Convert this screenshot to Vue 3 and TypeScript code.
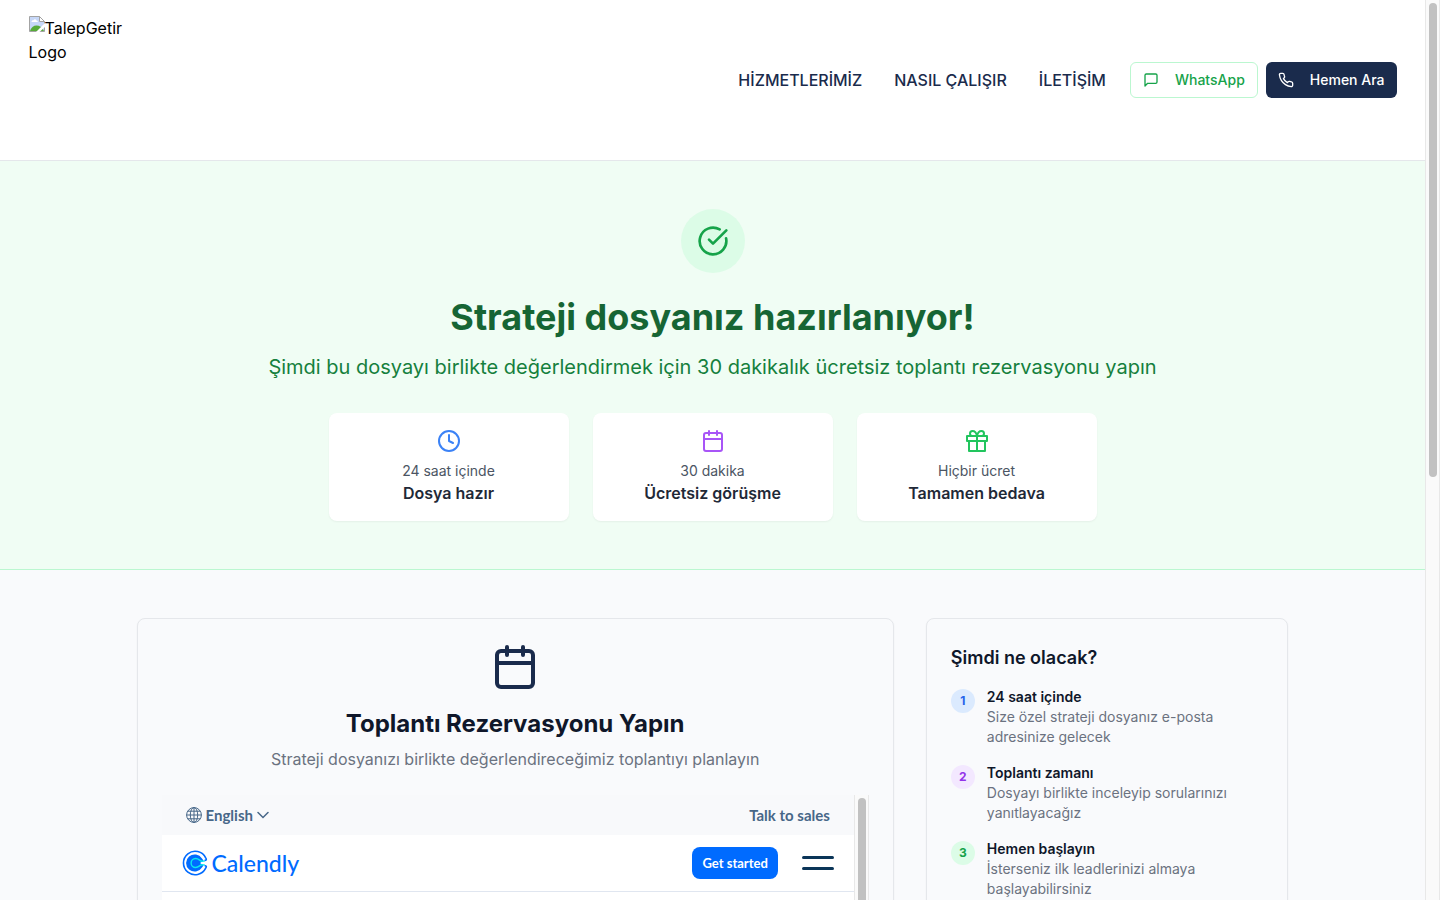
<script setup lang="ts">
interface NavItem {
  label: string
  href: string
}

interface Highlight {
  icon: 'clock' | 'calendar' | 'gift'
  caption: string
  title: string
}

interface Step {
  tone: 'blue' | 'purple' | 'green'
  title: string
  text: string
}

const navItems: NavItem[] = [
  { label: 'HİZMETLERİMİZ', href: '#hizmetler' },
  { label: 'NASIL ÇALIŞIR', href: '#nasil-calisir' },
  { label: 'İLETİŞİM', href: '#iletisim' },
]

const highlights: Highlight[] = [
  { icon: 'clock', caption: '24 saat içinde', title: 'Dosya hazır' },
  { icon: 'calendar', caption: '30 dakika', title: 'Ücretsiz görüşme' },
  { icon: 'gift', caption: 'Hiçbir ücret', title: 'Tamamen bedava' },
]

const steps: Step[] = [
  { tone: 'blue', title: '24 saat içinde', text: 'Size özel strateji dosyanız e-posta adresinize gelecek' },
  { tone: 'purple', title: 'Toplantı zamanı', text: 'Dosyayı birlikte inceleyip sorularınızı yanıtlayacağız' },
  { tone: 'green', title: 'Hemen başlayın', text: 'İsterseniz ilk leadlerinizi almaya başlayabilirsiniz' },
]
</script>

<template>
  <div class="window">
    <div class="page">
      <header class="site-header">
        <div class="header-inner">
          <a class="brand" href="#">
            <svg class="brand-icon" viewBox="0 0 16 16" aria-hidden="true">
              <path d="M.5.5h10l5 5v10H.5z" fill="#c6d7f8" stroke="#a3a3a3" />
              <path d="M2.500 6c0-1.400 1.200-1.900 2-1.700C5 3 7 3 7.400 4.400 8.500 4.300 9 5.200 8.700 6z" fill="#fff" />
              <path d="M1 15c1-3.500 3.500-5.500 6.500-5.500S13 11 15 15z" fill="#57ab39" />
              <path d="M16 7 7 16h3.500l5.500-5z" fill="#fff" />
              <path d="M10.500.5v5h5z" fill="#fff" stroke="#a3a3a3" />
            </svg>TalepGetir Logo
          </a>
          <div class="header-right">
            <nav class="nav">
              <a v-for="item in navItems" :key="item.href" :href="item.href">{{ item.label }}</a>
            </nav>
            <div class="actions">
              <button type="button" class="btn btn-outline">
                <svg class="icon" viewBox="0 0 24 24"><path d="M21 15a2 2 0 0 1-2 2H7l-4 4V5a2 2 0 0 1 2-2h14a2 2 0 0 1 2 2z" /></svg>
                WhatsApp
              </button>
              <button type="button" class="btn btn-solid">
                <svg class="icon" viewBox="0 0 24 24"><path d="M22 16.920v3a2 2 0 0 1-2.180 2 19.790 19.790 0 0 1-8.630-3.070 19.500 19.500 0 0 1-6-6 19.790 19.790 0 0 1-3.070-8.670A2 2 0 0 1 4.110 2h3a2 2 0 0 1 2 1.720 12.840 12.840 0 0 0 .7 2.810 2 2 0 0 1-.45 2.110L8.090 9.910a16 16 0 0 0 6 6l1.270-1.270a2 2 0 0 1 2.110-.45 12.840 12.840 0 0 0 2.810.7A2 2 0 0 1 22 16.920z" /></svg>
                Hemen Ara
              </button>
            </div>
          </div>
        </div>
      </header>

      <section class="hero">
        <div class="hero-badge">
          <svg class="icon" viewBox="0 0 24 24"><path d="M21.801 10A10 10 0 1 1 17 3.335" /><path d="m9 11 3 3L22 4" /></svg>
        </div>
        <h1>Strateji dosyanız hazırlanıyor!</h1>
        <p class="hero-lead">Şimdi bu dosyayı birlikte değerlendirmek için 30 dakikalık ücretsiz toplantı rezervasyonu yapın</p>
        <div class="highlights">
          <div v-for="item in highlights" :key="item.title" class="highlight">
            <svg class="icon" :class="item.icon" viewBox="0 0 24 24">
              <template v-if="item.icon === 'clock'">
                <circle cx="12" cy="12" r="10" /><path d="M12 6v6l4 2" />
              </template>
              <template v-else-if="item.icon === 'calendar'">
                <path d="M8 2v4M16 2v4M3 10h18" /><rect x="3" y="4" width="18" height="18" rx="2" />
              </template>
              <template v-else>
                <path d="M20 12v10H4V12M12 22V7" />
                <rect x="2" y="7" width="20" height="5" />
                <path d="M12 7H7.500a2.500 2.500 0 0 1 0-5C11 2 12 7 12 7zM12 7h4.500a2.500 2.500 0 0 0 0-5C13 2 12 7 12 7z" />
              </template>
            </svg>
            <p class="caption">{{ item.caption }}</p>
            <p class="highlight-title">{{ item.title }}</p>
          </div>
        </div>
      </section>

      <main class="content">
        <section class="card booking">
          <svg class="icon booking-icon" viewBox="0 0 24 24"><path d="M8 2v4M16 2v4M3 10h18" /><rect x="3" y="4" width="18" height="18" rx="2" /></svg>
          <h2>Toplantı Rezervasyonu Yapın</h2>
          <p class="booking-lead">Strateji dosyanızı birlikte değerlendireceğimiz toplantıyı planlayın</p>
          <div class="embed">
            <div class="embed-page">
              <div class="embed-top">
                <button type="button" class="language">
                  <svg class="globe" viewBox="0 0 16 16" aria-hidden="true">
                    <circle cx="8" cy="8" r="7.400" />
                    <ellipse cx="8" cy="8" rx="3.700" ry="7.400" />
                    <path d="M8 .6v14.800M.6 8h14.800M1.800 4.200h12.400M1.800 11.800h12.400" />
                  </svg>
                  English
                  <svg class="chevron" viewBox="0 0 12 8" aria-hidden="true"><path d="m1 1.500 5 5 5-5" /></svg>
                </button>
                <a class="sales" href="#sales">Talk to sales</a>
              </div>
              <div class="embed-nav">
                <a class="calendly" href="#calendly">
                  <svg viewBox="0 0 26 26" aria-hidden="true">
                    <path d="M22.500 15.500c2 .3 2.200 1.200 1.200 2.600A11.700 11.700 0 1 1 23.700 7.900c1 1.400.8 2.300-1.200 2.600" fill="none" stroke="#006bff" stroke-width="1.600" />
                    <path d="M20 8.500A8.600 8.600 0 1 0 20 17.500L21.500 15.500 18 13l3.500-2.500z" fill="#006bff" />
                    <path d="M22.800 10.800c-2 .7-3.700.5-5.200-.7-1-.8-2-1.600-4-1.600a4.500 4.500 0 0 0 0 9c2 0 3-.8 4-1.600 1.500-1.200 3.200-1.400 5.200-.7" fill="none" stroke="#0ae8f0" stroke-width="1.400" />
                  </svg>
                  <span>Calendly</span>
                </a>
                <button type="button" class="start">Get started</button>
                <button type="button" class="menu" aria-label="Menu"><i></i><i></i></button>
              </div>
            </div>
            <div class="scrollbar" aria-hidden="true"><div class="thumb thumb-embed"></div></div>
          </div>
        </section>

        <aside class="card next">
          <h3>Şimdi ne olacak?</h3>
          <ol class="steps">
            <li v-for="(step, index) in steps" :key="step.title">
              <span class="number" :class="step.tone">{{ index + 1 }}</span>
              <div>
                <p class="step-title">{{ step.title }}</p>
                <p class="step-text">{{ step.text }}</p>
              </div>
            </li>
          </ol>
        </aside>
      </main>
    </div>
    <div class="scrollbar" aria-hidden="true"><div class="thumb thumb-page"></div></div>
  </div>
</template>

<style>
body {
  margin: 0;
}
</style>

<style scoped>
* {
  box-sizing: border-box;
  margin: 0;
  padding: 0;
}

.window {
  display: flex;
  height: 100vh;
  overflow: hidden;
  font-family: Inter, "Liberation Sans", sans-serif;
  font-size: 16px;
  line-height: 24px;
  color: #0f172a;
  background: #f9fafc;
}

.page {
  flex: 1;
  min-width: 0;
  overflow: hidden;
}

a {
  color: inherit;
  text-decoration: none;
}

button {
  font: inherit;
  border: 0;
  background: none;
  cursor: pointer;
}

.icon {
  fill: none;
  stroke: currentColor;
  stroke-width: 2;
  stroke-linecap: round;
  stroke-linejoin: round;
}

.site-header {
  background: #fff;
  border-bottom: 1px solid #e5e7eb;
}

.header-inner {
  display: flex;
  align-items: center;
  justify-content: space-between;
  max-width: 1400px;
  margin: 0 auto;
  padding: 16px;
}

.brand {
  width: 128px;
  height: 128px;
  color: #000;
}

.brand-icon {
  width: 16px;
  height: 16px;
  vertical-align: top;
}

.header-right {
  display: flex;
  align-items: center;
  gap: 24px;
}

.nav {
  display: flex;
  gap: 32px;
  font-weight: 500;
  color: #1a2b4c;
}

.actions {
  display: flex;
  gap: 8px;
}

.btn {
  display: flex;
  align-items: center;
  gap: 16px;
  height: 36px;
  padding: 0 12px;
  border-radius: 6px;
  font-size: 14px;
  font-weight: 500;
  line-height: 20px;
}

.btn .icon {
  width: 16px;
  height: 16px;
}

.btn-outline {
  border: 1px solid #bbf7d0;
  background: #fff;
  color: #16a34a;
}

.btn-solid {
  background: #1a2b4c;
  color: #fff;
}

.hero {
  display: flex;
  flex-direction: column;
  align-items: center;
  padding: 48px 16px;
  border-bottom: 1px solid #bbf7d0;
  background: #f0fdf4;
  text-align: center;
}

.hero-badge {
  display: flex;
  align-items: center;
  justify-content: center;
  width: 64px;
  height: 64px;
  margin-bottom: 24px;
  border-radius: 50%;
  background: #dcfce7;
  color: #16a34a;
}

.hero-badge .icon {
  width: 32px;
  height: 32px;
}

h1 {
  margin-bottom: 16px;
  font-size: 36px;
  font-weight: 700;
  line-height: 40px;
  color: #166534;
}

.hero-lead {
  margin-bottom: 32px;
  font-size: 20px;
  line-height: 28px;
  color: #15803d;
}

.highlights {
  display: grid;
  grid-template-columns: repeat(3, 1fr);
  gap: 24px;
  width: 100%;
  max-width: 768px;
}

.highlight {
  padding: 16px;
  border-radius: 8px;
  background: #fff;
  box-shadow: 0 1px 2px rgba(0, 0, 0, 0.05);
}

.highlight .icon {
  display: block;
  width: 24px;
  height: 24px;
  margin: 0 auto 8px;
}

.clock {
  color: #3b82f6;
}

.calendar {
  color: #a855f7;
}

.gift {
  color: #22c55e;
}

.caption {
  font-size: 14px;
  line-height: 20px;
  color: #4b5563;
}

.highlight-title {
  font-weight: 600;
  color: #1f2937;
}

.content {
  display: grid;
  grid-template-columns: repeat(3, 1fr);
  gap: 32px;
  max-width: 1184px;
  margin: 0 auto;
  padding: 48px 16px;
}

.card {
  padding: 24px;
  border: 1px solid #e5e7eb;
  border-radius: 8px;
  background: #f9fafc;
  box-shadow: 0 1px 2px rgba(0, 0, 0, 0.05);
}

.booking {
  grid-column: span 2;
  text-align: center;
}

.booking-icon {
  display: block;
  width: 48px;
  height: 48px;
  margin: 0 auto 16px;
  color: #1a2b4c;
}

h2 {
  margin-bottom: 6px;
  font-size: 24px;
  font-weight: 700;
  line-height: 34px;
}

.booking-lead {
  margin-bottom: 24px;
  color: #6b7280;
}

.embed {
  display: flex;
  height: 700px;
  font-family: Lato, "Open Sans", sans-serif;
  background: #fff;
}

.embed-page {
  flex: 1;
  min-width: 0;
}

.embed-top {
  display: flex;
  align-items: center;
  justify-content: space-between;
  height: 40px;
  padding: 0 24px;
  background: #f8f9fb;
  color: #476788;
  font-size: 15px;
  font-weight: 700;
  line-height: 20px;
}

.language {
  display: flex;
  align-items: center;
  gap: 4px;
  color: inherit;
}

.globe {
  width: 16px;
  height: 16px;
  fill: none;
  stroke: currentColor;
  stroke-width: 1;
}

.chevron {
  width: 12px;
  height: 8px;
  fill: none;
  stroke: currentColor;
  stroke-width: 1.5;
  stroke-linecap: round;
}

.embed-nav {
  display: flex;
  align-items: center;
  height: 57px;
  padding: 0 20px;
  border-bottom: 1px solid #e0e6f0;
}

.calendly {
  display: flex;
  align-items: center;
  gap: 4px;
  margin-right: auto;
  color: #006bff;
  font-size: 23px;
  font-weight: 500;
  line-height: 32px;
}

.calendly svg {
  width: 26px;
  height: 26px;
}

.start {
  height: 32px;
  margin-right: 24px;
  padding: 0 10px;
  border-radius: 8px;
  background: #006bff;
  color: #fff;
  font-size: 13px;
  font-weight: 700;
}

.menu {
  display: flex;
  flex-direction: column;
  gap: 8px;
  width: 32px;
}

.menu i {
  height: 3px;
  border-radius: 2px;
  background: #0b3558;
}

.next {
  grid-column: span 1;
}

h3 {
  margin-bottom: 14px;
  font-size: 18px;
  font-weight: 600;
  line-height: 30px;
}

.steps {
  display: flex;
  flex-direction: column;
  gap: 16px;
  list-style: none;
  font-size: 14px;
  line-height: 20px;
}

.steps li {
  display: flex;
  align-items: flex-start;
  gap: 12px;
}

.number {
  flex: none;
  width: 24px;
  height: 24px;
  margin-top: 2px;
  border-radius: 50%;
  font-size: 12px;
  font-weight: 700;
  line-height: 24px;
  text-align: center;
}

.blue {
  background: #dbeafe;
  color: #2563eb;
}

.purple {
  background: #f3e8ff;
  color: #9333ea;
}

.green {
  background: #dcfce7;
  color: #16a34a;
}

.step-title {
  font-weight: 600;
}

.step-text {
  color: #6b7280;
}

.scrollbar {
  flex: none;
  width: 15px;
  padding: 3px;
  border: 1px solid #e8e8e8;
  border-width: 0 1px;
  background: #fafafa;
}

.thumb {
  width: 8px;
  border-radius: 4px;
  background: #c1c1c1;
}

.thumb-page {
  height: 53%;
}

.thumb-embed {
  height: 40%;
}
</style>
